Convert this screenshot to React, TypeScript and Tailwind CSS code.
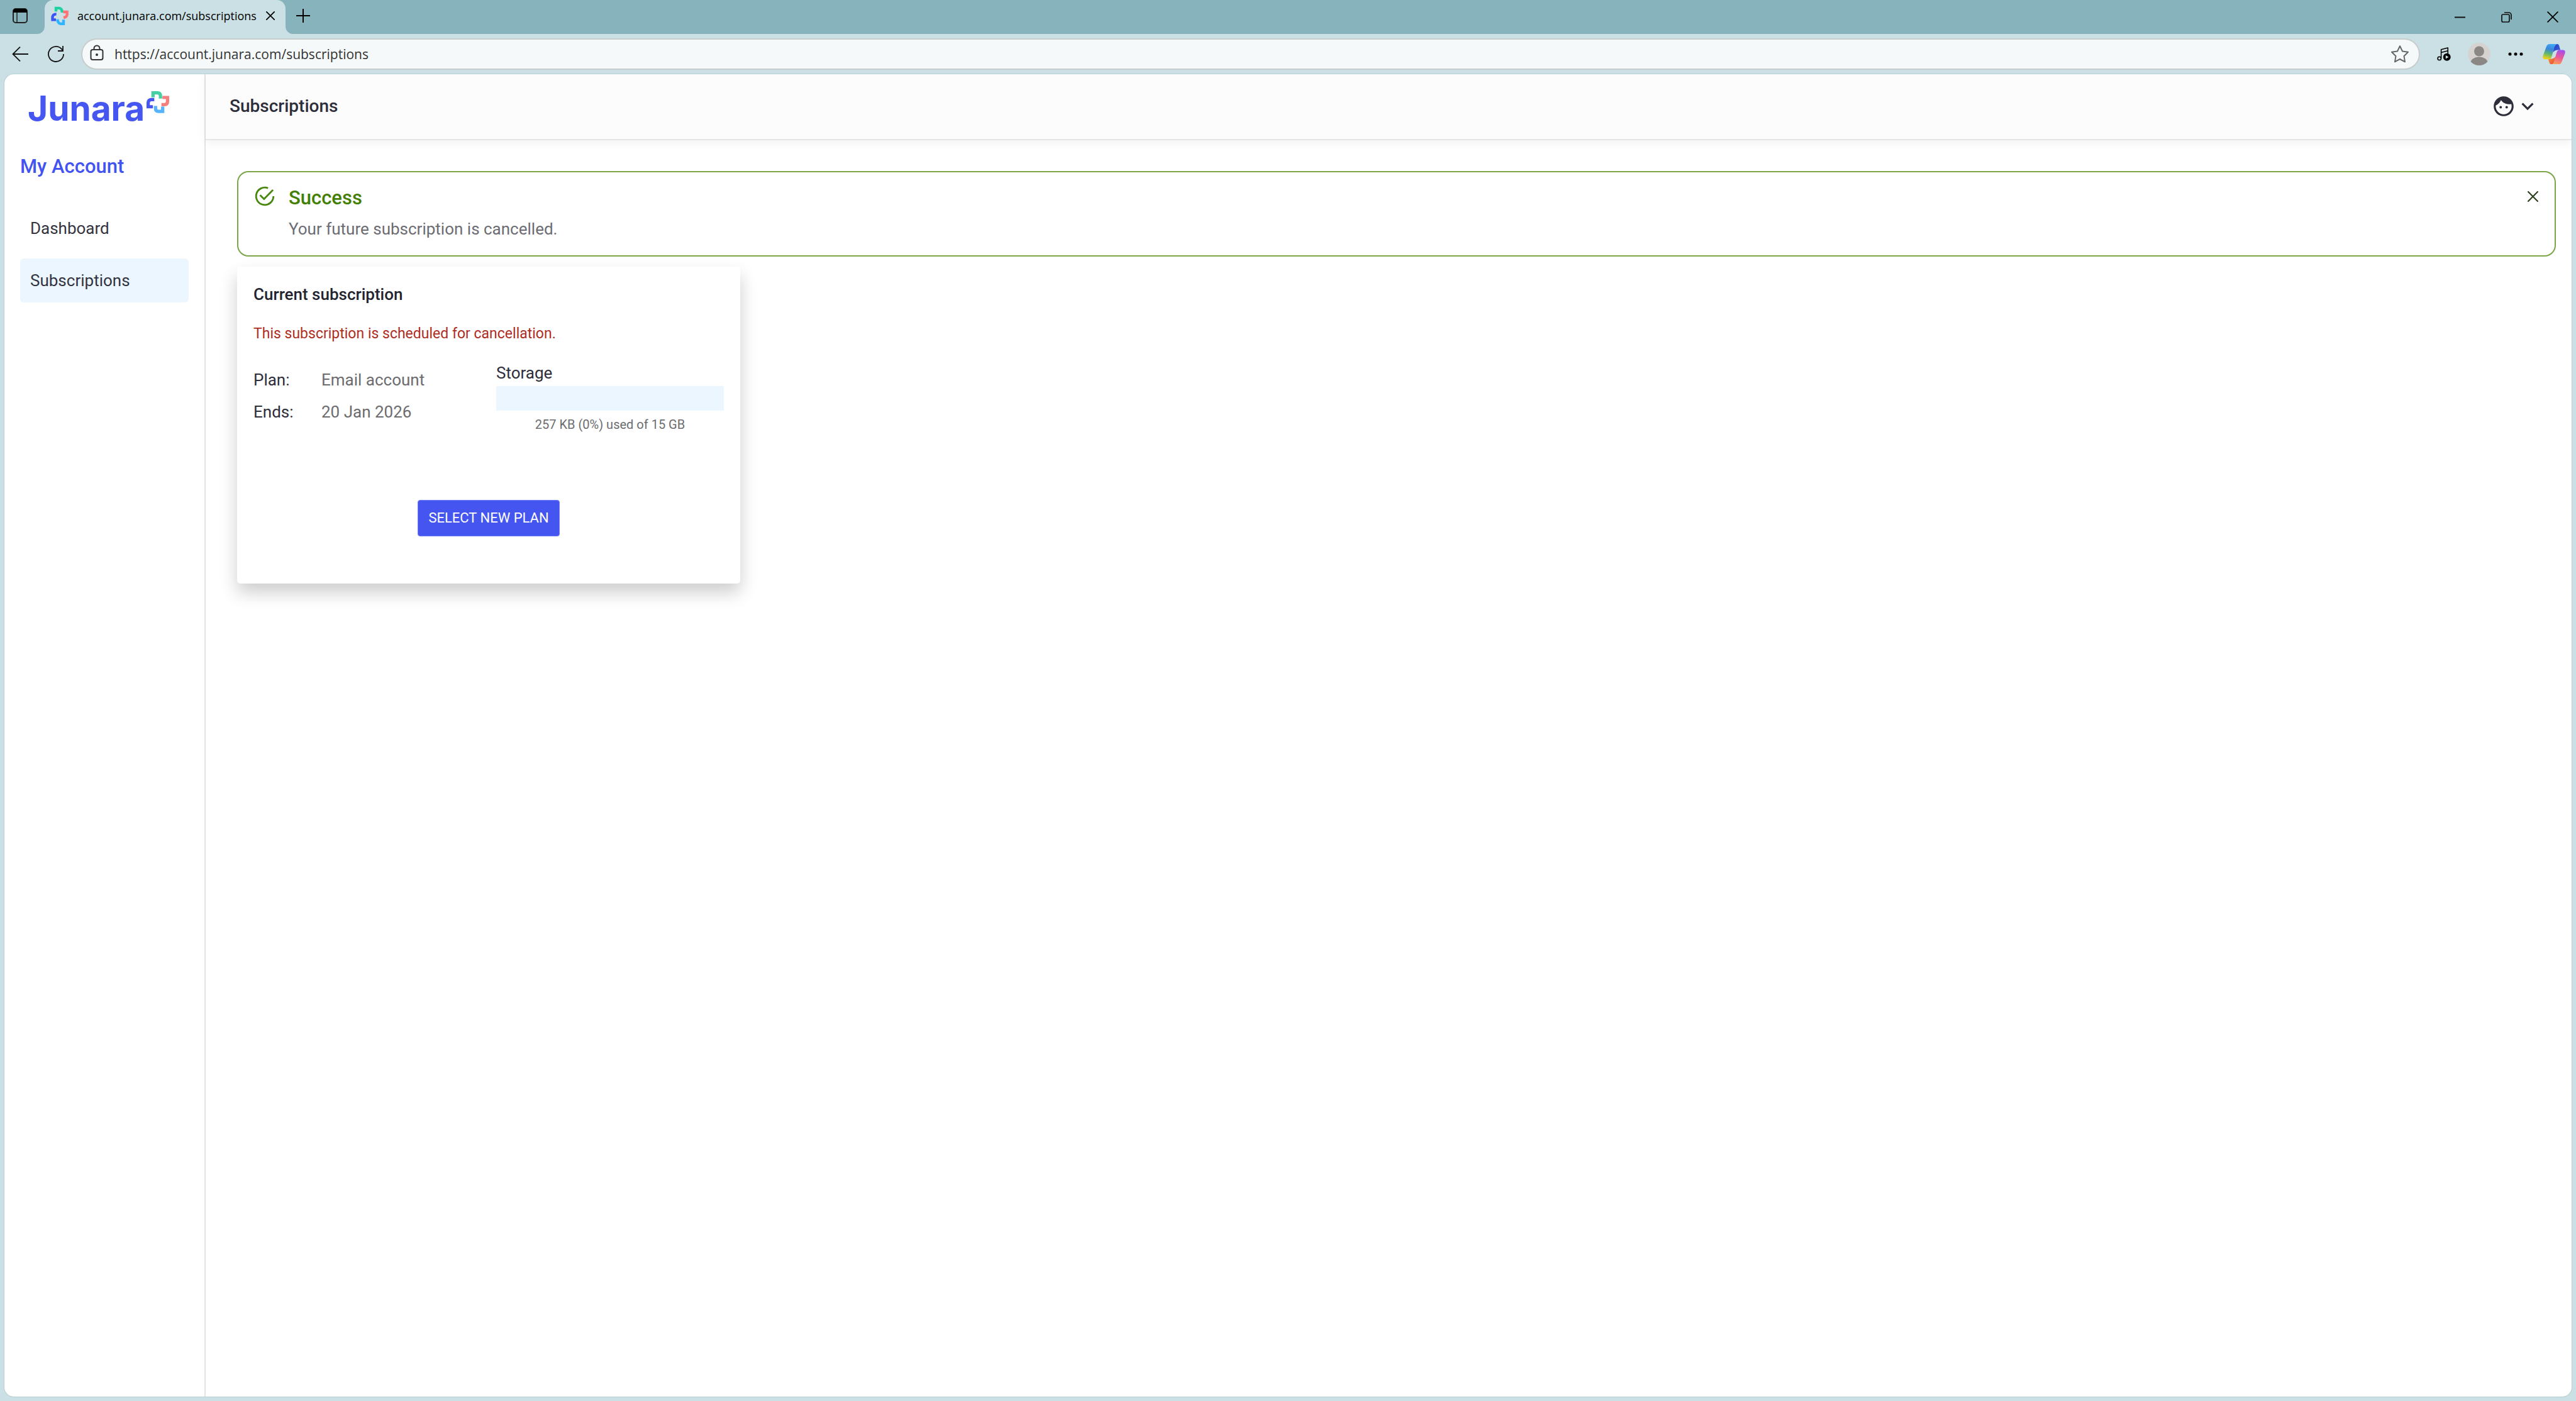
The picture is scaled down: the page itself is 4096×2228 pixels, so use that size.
import React, { useState } from "react";
import { MdFace, MdKeyboardArrowDown } from "react-icons/md";

const navItems = [
  { label: "Dashboard", href: "#dashboard", active: false },
  { label: "Subscriptions", href: "#subscriptions", active: true },
];

const planDetails = [
  { label: "Plan:", value: "Email account" },
  { label: "Ends:", value: "20 Jan 2026" },
];

const JunaraMark = ({ className }: { className?: string }) => (
  <svg
    viewBox="0 0 117 114"
    fill="none"
    strokeWidth="17"
    className={className}
    aria-hidden="true"
  >
    <path d="M33.5 32V8.5H57Q72 9 72 24V38" stroke="#45cfa3" />
    <path d="M82 32.5H108.5V54Q108 69 93 69.5H77" stroke="#f47f7e" />
    <path d="M46.5 76V90Q47 104 61 104.5H83.5V80" stroke="#55b4fb" />
    <path d="M40 43.5H24Q9 45 8.5 60V80.5H33" stroke="#4656f0" />
  </svg>
);

const Favicon = () => (
  <svg viewBox="0 0 84 92" fill="none" strokeWidth="13" className="w-7" aria-hidden="true">
    <path d="M24 25V8.5H38Q52 10 53 24V30" stroke="#1dd1a1" />
    <path d="M58 27H77V40Q75 52 60 54" stroke="#ff7375" />
    <path d="M31 62Q33 82 48 84H60V64" stroke="#2fb4ff" />
    <path d="M26 37Q10 37 7.500 50V64H24" stroke="#3c55f4" />
  </svg>
);

const WorkspacesIcon = () => (
  <svg viewBox="0 0 24 24" fill="none" className="size-6" aria-hidden="true">
    <rect x="1" y="1" width="22" height="22" rx="4" stroke="#222" strokeWidth="2" />
    <path d="M1 7V5a4 4 0 0 1 4-4h14a4 4 0 0 1 4 4v2z" fill="#000" />
    <path d="M7 7v16" stroke="#222" strokeWidth="1.500" />
  </svg>
);

const CloseIcon = ({ className }: { className?: string }) => (
  <svg
    viewBox="0 0 16 16"
    fill="none"
    stroke="currentColor"
    strokeLinecap="round"
    className={className}
    aria-hidden="true"
  >
    <path d="M1 1l14 14M15 1L1 15" />
  </svg>
);

const MediaIcon = () => (
  <svg viewBox="0 0 68 70" fill="none" className="size-[22px]" aria-hidden="true">
    <g stroke="#000" strokeWidth="5" strokeLinejoin="round">
      <circle cx="11" cy="57" r="8.5" />
      <path d="M20 57V12L54 3V34M20 27l34-9" />
    </g>
    <circle cx="49" cy="50" r="19" fill="#000" />
    <path d="M43 41v18l15-9z" fill="#cbe0e4" />
  </svg>
);

const ProfileIcon = () => (
  <svg viewBox="0 0 36 36" className="size-9" aria-hidden="true">
    <clipPath id="profile-clip">
      <circle cx="18" cy="18" r="18" />
    </clipPath>
    <g clipPath="url(#profile-clip)">
      <rect width="36" height="36" fill="#d5d2cf" />
      <circle cx="18" cy="13.5" r="8" fill="#8b8784" />
      <ellipse cx="18" cy="33" rx="14" ry="10.5" fill="#8b8784" />
    </g>
  </svg>
);

const CopilotIcon = () => (
  <svg viewBox="0 0 116 106" className="w-9" aria-hidden="true">
    <defs>
      <linearGradient id="cp-left" x1="0.6" y1="0" x2="0.35" y2="1">
        <stop offset="0" stopColor="#3fa9f5" />
        <stop offset="0.35" stopColor="#3a86dc" />
        <stop offset="0.65" stopColor="#5cb574" />
        <stop offset="1" stopColor="#f3d313" />
      </linearGradient>
      <linearGradient id="cp-right" x1="0.7" y1="0" x2="0.4" y2="1">
        <stop offset="0" stopColor="#a24df0" />
        <stop offset="0.5" stopColor="#ea5a94" />
        <stop offset="1" stopColor="#fda252" />
      </linearGradient>
      <linearGradient id="cp-fold" x1="0" y1="0" x2="1" y2="1">
        <stop offset="0" stopColor="#2637b8" />
        <stop offset="1" stopColor="#3a6be8" />
      </linearGradient>
      <linearGradient id="cp-foot" x1="0" y1="0" x2="1" y2="1">
        <stop offset="0" stopColor="#f79a45" />
        <stop offset="1" stopColor="#e2432f" />
      </linearGradient>
    </defs>
    <path d="M60 0h14q8 0 11 11l6 20H76q-16 0-22 12z" fill="url(#cp-fold)" />
    <path d="M28 76l6 18q4 12 14 12 8 0 12-14l6-28q-8 12-22 12z" fill="url(#cp-foot)" />
    <path
      d="M36 0q-12 0-17 13L2 60q-6 18 12 18h18q10 0 14-12L59 20Q64 2 76 0z"
      fill="url(#cp-left)"
    />
    <path
      d="M80 106q12 0 17-13l17-45q5-17-11-17H86q-10 0-14 12L59 86q-5 18-17 20z"
      fill="url(#cp-right)"
    />
  </svg>
);

const BrowserChrome = () => (
  <div className="font-['Open_Sans',sans-serif] text-black">
    <div className="flex h-[54px] items-center bg-[#86b3bc]">
      <button
        aria-label="Workspaces"
        className="flex h-full w-[59px] items-center justify-center pb-1 pl-1"
      >
        <WorkspacesIcon />
      </button>
      <svg viewBox="0 0 12 12" className="size-3 self-end" aria-hidden="true">
        <path d="M12 0v12H0A12 12 0 0 0 12 0z" fill="#cbe0e4" />
      </svg>
      <div className="flex h-full w-[383px] items-center rounded-t-[14px] bg-[#cbe0e4] pr-[14px] pb-1 pl-[10px]">
        <Favicon />
        <span className="ml-[14px] flex-1 text-[18px] leading-6 whitespace-nowrap">
          account.junara.com/subscriptions
        </span>
        <button aria-label="Close tab" className="flex size-5 items-center justify-center">
          <CloseIcon className="size-[14px] stroke-2" />
        </button>
      </div>
      <svg viewBox="0 0 12 12" className="size-3 self-end" aria-hidden="true">
        <path d="M0 0v12h12A12 12 0 0 1 0 0z" fill="#cbe0e4" />
      </svg>
      <button aria-label="New tab" className="flex h-full w-8 items-center justify-center pb-1">
        <svg viewBox="0 0 22 22" className="size-[22px]" stroke="#000" strokeWidth="2">
          <path d="M11 0v22M0 11h22" />
        </svg>
      </button>
      <div className="ml-auto flex h-full">
        <button aria-label="Minimize" className="flex w-[74px] items-center justify-center">
          <svg viewBox="0 0 17 17" className="size-[17px]" stroke="#111" strokeWidth="2">
            <path d="M0 8.5h17" />
          </svg>
        </button>
        <button aria-label="Restore" className="flex w-[74px] items-center justify-center">
          <svg viewBox="0 0 17 17" className="size-[17px]" fill="none" stroke="#111" strokeWidth="1.700">
            <rect x="1" y="4" width="12" height="12" rx="2" />
            <path d="M5 1h7a4 4 0 0 1 4 4v7" />
          </svg>
        </button>
        <button aria-label="Close" className="flex w-[74px] items-center justify-center">
          <CloseIcon className="size-[18px] stroke-[1.6]" />
        </button>
      </div>
    </div>

    <div className="flex h-16 items-center pr-[14px] pl-3">
      <button aria-label="Back" className="flex size-10 items-center justify-center">
        <svg viewBox="0 0 26 24" className="w-[26px]" fill="none" stroke="#111" strokeWidth="1.800">
          <path d="M26 12H1.500M13 .7L1.500 12 13 23.300" />
        </svg>
      </button>
      <button aria-label="Refresh" className="ml-[17px] flex size-10 items-center justify-center">
        <svg viewBox="0 0 26 26" className="size-[26px]" fill="none" stroke="#111" strokeWidth="1.800">
          <path d="M25 13A12 12 0 1 1 21.500 4.500L24 7.500" />
          <path d="M24 0v8h-8" />
        </svg>
      </button>
      <div className="mr-5 ml-5 flex h-[50px] flex-1 items-center rounded-full border-2 border-[#c9cccd] bg-[#f6f9fa] pr-4 pl-3">
        <svg
          viewBox="0 0 22 26"
          className="mb-1 w-[22px]"
          fill="none"
          stroke="#333"
          strokeWidth="2"
          aria-hidden="true"
        >
          <rect x="1.500" y="8" width="19" height="16" rx="3" />
          <path d="M6.500 8V6a4.500 4.500 0 0 1 9 0v2" />
          <circle cx="11" cy="16" r="1" fill="#333" />
        </svg>
        <input
          type="text"
          aria-label="Address"
          defaultValue="https://account.junara.com/subscriptions"
          className="ml-[17px] min-w-0 flex-1 bg-transparent text-[21px] leading-7 text-[#333] outline-none"
        />
        <button aria-label="Add to favorites" className="flex items-center">
          <svg
            viewBox="0 0 28 28"
            className="size-7"
            fill="none"
            stroke="#666"
            strokeWidth="2"
            strokeLinejoin="round"
          >
            <path d="M14 1.200l4 8.300 9 1.300-6.500 6.400 1.500 9.100-8-4.300-8 4.300 1.500-9.100L1 10.800l9-1.300z" />
          </svg>
        </button>
      </div>
      <div className="flex items-center gap-5">
        <button aria-label="Media controls" className="flex w-9 justify-center">
          <MediaIcon />
        </button>
        <button aria-label="Profile">
          <ProfileIcon />
        </button>
        <button aria-label="Settings and more" className="flex w-10 justify-center">
          <svg viewBox="0 0 24 6" className="w-6">
            <circle cx="3" cy="3" r="2.500" />
            <circle cx="12" cy="3" r="2.500" />
            <circle cx="21" cy="3" r="2.500" />
          </svg>
        </button>
        <button aria-label="Copilot" className="flex w-[42px] justify-center">
          <CopilotIcon />
        </button>
      </div>
    </div>
  </div>
);

const Sidebar = () => (
  <aside className="w-80 shrink-0 border-r-2 border-[#e4e4e4] px-[25px] pt-[27px]">
    <a href="#home" className="ml-3 flex h-[102px] items-start gap-[3px] text-[#4656f0]">
      <span className="font-['Inter',sans-serif] text-[55px] leading-[54px] font-bold">
        Junara
      </span>
      <JunaraMark className="w-9" />
    </a>
    <h2 className="text-[31px] leading-9 font-medium text-[#4353f0]">My Account</h2>
    <nav className="mt-[45px] flex flex-col gap-[13px]">
      {navItems.map((item) => (
        <a
          key={item.label}
          href={item.href}
          className={`rounded-md px-4 py-[17px] text-[26px] leading-9 text-[#33343f] ${
            item.active ? "bg-[#ebf6ff]" : ""
          }`}
        >
          {item.label}
        </a>
      ))}
    </nav>
  </aside>
);

const SuccessAlert = ({ onClose }: { onClose: () => void }) => (
  <div
    role="status"
    className="mb-4 flex items-start rounded-[18px] border-2 border-[#7ba548] pt-5 pr-[17px] pb-6 pl-6"
  >
    <svg
      viewBox="0 0 24 24"
      className="size-9 shrink-0"
      fill="none"
      stroke="#4a870f"
      strokeWidth="1.900"
      aria-hidden="true"
    >
      <path d="M15.500 3.500A9.200 9.200 0 1 0 21.200 12" />
      <path d="M7 10.800l4.200 4.200L20.700 5.300" />
    </svg>
    <div className="ml-5 flex-1 pt-[3px]">
      <h2 className="text-[31px] leading-9 font-medium text-[#437f05]">Success</h2>
      <p className="mt-[13px] text-[26px] leading-9 text-[#6c6c74]">
        Your future subscription is cancelled.
      </p>
    </div>
    <button
      aria-label="Dismiss"
      onClick={onClose}
      className="flex size-9 items-center justify-center text-[#2c3d1b]"
    >
      <CloseIcon className="size-[17px] stroke-[2]" />
    </button>
  </div>
);

const SubscriptionCard = () => (
  <section className="w-[800px] rounded-[5px] bg-white px-[26px] pt-[26px] pb-[75px] shadow-[0_14px_28px_rgba(0,0,0,0.2)]">
    <h2 className="text-[26px] leading-9 font-medium text-[#23242f]">Current subscription</h2>
    <p className="mt-[29px] text-[23px] leading-8 text-[#ae2d1f]">
      This subscription is scheduled for cancellation.
    </p>

    <div className="mt-7 flex">
      <dl className="flex flex-1 flex-col gap-[15px] pt-[11px] text-[26px] leading-9">
        {planDetails.map((detail) => (
          <div key={detail.label} className="flex">
            <dt className="w-[108px] text-[#2d2e3a]">{detail.label}</dt>
            <dd className="text-[#6c6c6f]">{detail.value}</dd>
          </div>
        ))}
      </dl>
      <div className="w-[362px]">
        <h3 id="storage-label" className="text-[26px] leading-9 text-[#2d2e3a]">
          Storage
        </h3>
        <div
          role="progressbar"
          aria-labelledby="storage-label"
          aria-valuenow={0}
          className="mt-[3px] h-[39px] bg-[#ebf6ff]"
        />
        <p className="mt-2 text-center text-[20px] leading-7 text-[#6c6c6f]">
          257 KB (0%) used of 15 GB
        </p>
      </div>
    </div>

    <div className="mt-[106px] flex justify-center">
      <button className="rounded-[4px] border border-[#7480f5] bg-[#4555f0] px-4 py-3 text-[22px] leading-8 text-white">
        SELECT NEW PLAN
      </button>
    </div>
  </section>
);

const App = () => {
  const [showAlert, setShowAlert] = useState(true);

  return (
    <div className="flex min-h-screen flex-col bg-[#cbe0e4] font-['Roboto',sans-serif]">
      <BrowserChrome />
      <div className="mx-[7px] mb-[7px] flex flex-1 overflow-hidden rounded-[15px] bg-white shadow-[0_0_0_1px_#b8cfd3]">
        <Sidebar />
        <div className="flex min-w-0 flex-1 flex-col">
          <header className="flex h-[105px] items-center border-b-2 border-[#e6e6e6] bg-[#fcfcfc] pr-[51px] pb-[2px] pl-[38px] shadow-[0_4px_14px_rgba(0,0,0,0.06)]">
            <h1 className="text-[28px] leading-9 font-medium text-[#2d2e3a]">Subscriptions</h1>
            <button aria-label="Account menu" className="ml-auto flex items-center text-[#2d2e3a]">
              <MdFace className="size-[38px]" />
              <MdKeyboardArrowDown className="size-[38px]" />
            </button>
          </header>
          <main className="pt-[49px] pr-[25px] pl-[50px]">
            {showAlert && <SuccessAlert onClose={() => setShowAlert(false)} />}
            <SubscriptionCard />
          </main>
        </div>
      </div>
    </div>
  );
};

export default App;
